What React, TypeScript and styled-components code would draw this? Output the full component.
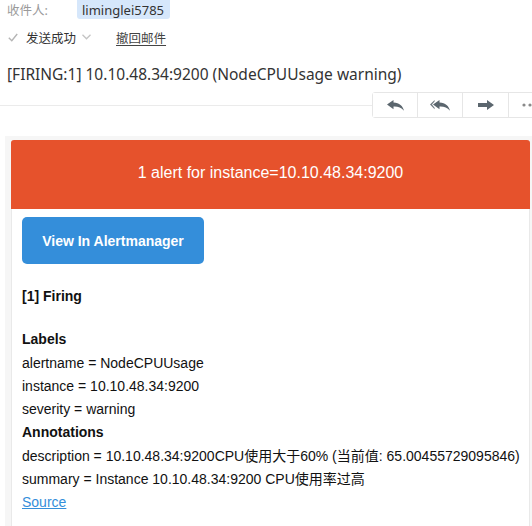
import * as React from 'react';
import styled, { createGlobalStyle } from 'styled-components';

const GlobalStyle = createGlobalStyle`
  html, body {
    margin: 0;
    padding: 0;
    background: #fff;
    overflow: hidden;
  }
  body {
    font-family: "Noto Sans", "Noto Sans CJK SC", sans-serif;
    color: #333;
  }
`;

const Page = styled.div`
  width: 532px;
  height: 526px;
  overflow: hidden;
`;

const MailHeader = styled.div`
  padding-left: 7px;
`;

const RecipientRow = styled.div`
  display: flex;
  align-items: center;
  height: 19px;
  font-size: 12.5px;
`;

const MetaLabel = styled.span`
  color: #9a9a9a;
  width: 70px;
`;

const Badge = styled.span`
  display: inline-flex;
  align-items: center;
  height: 19px;
  padding: 0 6px 0 5px;
  background: #d6e7fb;
  border-radius: 0 0 3px 3px;
  color: #333;
  font-size: 13px;
`;

const StatusRow = styled.div`
  display: flex;
  align-items: center;
  height: 36px;
  font-size: 12.5px;
  color: #333;
`;

const Check = styled.svg`
  width: 10px;
  height: 9px;
  margin: 0 8px 0 1px;
`;

const Caret = styled.svg`
  width: 9px;
  height: 6px;
  margin: 0 25px 0 6px;
`;

const RecallLink = styled.a`
  color: #444;
  text-decoration: underline;
  text-underline-offset: 2px;
`;

const Subject = styled.h1`
  margin: 0;
  height: 37px;
  display: flex;
  align-items: center;
  font-size: 15.5px;
  font-weight: normal;
  color: #333;
  white-space: nowrap;
`;

const ToolbarRow = styled.div`
  display: flex;
  align-items: center;
  height: 26px;
`;

const Rule = styled.div`
  flex-shrink: 0;
  width: 372px;
  height: 1px;
  background: #ebebeb;
`;

const ActionGroup = styled.div`
  display: flex;
  flex-shrink: 0;
  height: 26px;
  border: 1px solid #e6e6e6;
  border-radius: 3px;
  box-sizing: border-box;
`;

const ActionButton = styled.button<{ $width?: number }>`
  flex-shrink: 0;
  width: ${p => p.$width ?? 45}px;
  height: 100%;
  display: flex;
  align-items: center;
  justify-content: center;
  padding: 0;
  background: #fff;
  border: none;
  border-left: 1px solid #e6e6e6;
  &:first-child {
    border-left: none;
  }
  svg {
    display: block;
  }
`;

const MailBody = styled.div`
  margin: 18px 0 0 5px;
  padding: 4px 2px 0 6px;
  background: #f6f6f6;
  height: 400px;
`;

const Card = styled.div`
  background: #fff;
  border: 1px solid #e9e9e9;
  border-top: none;
  border-radius: 3px;
  font-family: "Liberation Sans", Helvetica, Arial, "Noto Sans CJK SC", sans-serif;
  font-size: 14px;
  color: #111;
`;

const AlertHeader = styled.div`
  height: 69px;
  display: flex;
  align-items: center;
  justify-content: center;
  margin: 0 -1px;
  padding-bottom: 3px;
  box-sizing: border-box;
  background: #e6522c;
  border-radius: 3px 3px 0 0;
  color: #fff;
  font-size: 16px;
`;

const CardContent = styled.div`
  padding: 8px 10px 20px;
`;

const ViewButton = styled.a`
  display: flex;
  align-items: center;
  justify-content: center;
  width: 182px;
  height: 47px;
  background: #348eda;
  border-radius: 5px;
  color: #fff;
  font-weight: bold;
  text-decoration: none;
`;

const Section = styled.div`
  margin-top: 20px;
  line-height: 23.3px;
  &:first-of-type {
    margin-top: 21px;
  }
`;

const Line = styled.div<{ $bold?: boolean }>`
  font-weight: ${p => (p.$bold ? 'bold' : 'normal')};
  white-space: nowrap;
`;

const SourceLink = styled.a`
  color: #348eda;
  text-decoration: underline;
`;

const ICON = '#5b666e';

const ReplyIcon = () => (
  <svg width="17" height="11" viewBox="0 0 17 11">
    <path d="M6.5 0 L0 4.6 L6.5 9.2 V6.6 C11 6.4 14.2 7.6 17 10.8 C15.8 6 12.5 3 6.5 2.6 Z" fill={ICON} />
  </svg>
);

const ReplyAllIcon = () => (
  <svg width="20" height="11" viewBox="0 0 20 11">
    <path d="M4.6 0 L0 4.6 L4.6 9.2 V7.8 L2 4.6 L4.6 1.4 Z" fill={ICON} opacity="0.85" />
    <path d="M9.5 0 L3 4.6 L9.5 9.2 V6.6 C14 6.4 17.2 7.6 20 10.8 C18.8 6 15.5 3 9.5 2.6 Z" fill={ICON} />
  </svg>
);

const ForwardIcon = () => (
  <svg width="16" height="10" viewBox="0 0 16 10">
    <path d="M0 3 H9 V0 L16 5 L9 10 V7 H0 Z" fill={ICON} />
  </svg>
);

const MoreIcon = () => (
  <svg width="18" height="4" viewBox="0 0 18 4">
    <circle cx="2" cy="2" r="1.6" fill="#8a8a8a" />
    <circle cx="8" cy="2" r="1.6" fill="#8a8a8a" />
    <circle cx="14" cy="2" r="1.6" fill="#8a8a8a" />
  </svg>
);

const App: React.FC = () => {
  return (
    <Page>
      <GlobalStyle />
      <MailHeader>
        <RecipientRow>
          <MetaLabel>收件人:</MetaLabel>
          <Badge>liminglei5785</Badge>
        </RecipientRow>
        <StatusRow>
          <Check viewBox="0 0 10 9">
            <path d="M0.8 4.8 L3.8 7.8 L9.2 1" stroke="#b5b5b5" strokeWidth="1.4" fill="none" />
          </Check>
          <span>发送成功</span>
          <Caret viewBox="0 0 9 6">
            <path d="M0.5 0.8 L4.5 4.8 L8.5 0.8" stroke="#c4c4c4" strokeWidth="1.3" fill="none" />
          </Caret>
          <RecallLink>撤回邮件</RecallLink>
        </StatusRow>
        <Subject>[FIRING:1] 10.10.48.34:9200 (NodeCPUUsage warning)</Subject>
      </MailHeader>
      <ToolbarRow>
        <Rule />
        <ActionGroup>
          <ActionButton $width={44}>
            <ReplyIcon />
          </ActionButton>
          <ActionButton>
            <ReplyAllIcon />
          </ActionButton>
          <ActionButton $width={46}>
            <ForwardIcon />
          </ActionButton>
          <ActionButton>
            <MoreIcon />
          </ActionButton>
        </ActionGroup>
      </ToolbarRow>
      <MailBody>
        <Card>
          <AlertHeader>1 alert for instance=10.10.48.34:9200</AlertHeader>
          <CardContent>
            <ViewButton>View In Alertmanager</ViewButton>
            <Section>
              <Line $bold>[1] Firing</Line>
            </Section>
            <Section>
              <Line $bold>Labels</Line>
              <Line>alertname = NodeCPUUsage</Line>
              <Line>instance = 10.10.48.34:9200</Line>
              <Line>severity = warning</Line>
              <Line $bold>Annotations</Line>
              <Line>description = 10.10.48.34:9200CPU使用大于60% (当前值: 65.00455729095846)</Line>
              <Line>summary = Instance 10.10.48.34:9200 CPU使用率过高</Line>
              <Line>
                <SourceLink>Source</SourceLink>
              </Line>
            </Section>
          </CardContent>
        </Card>
      </MailBody>
    </Page>
  );
};

export default App;
